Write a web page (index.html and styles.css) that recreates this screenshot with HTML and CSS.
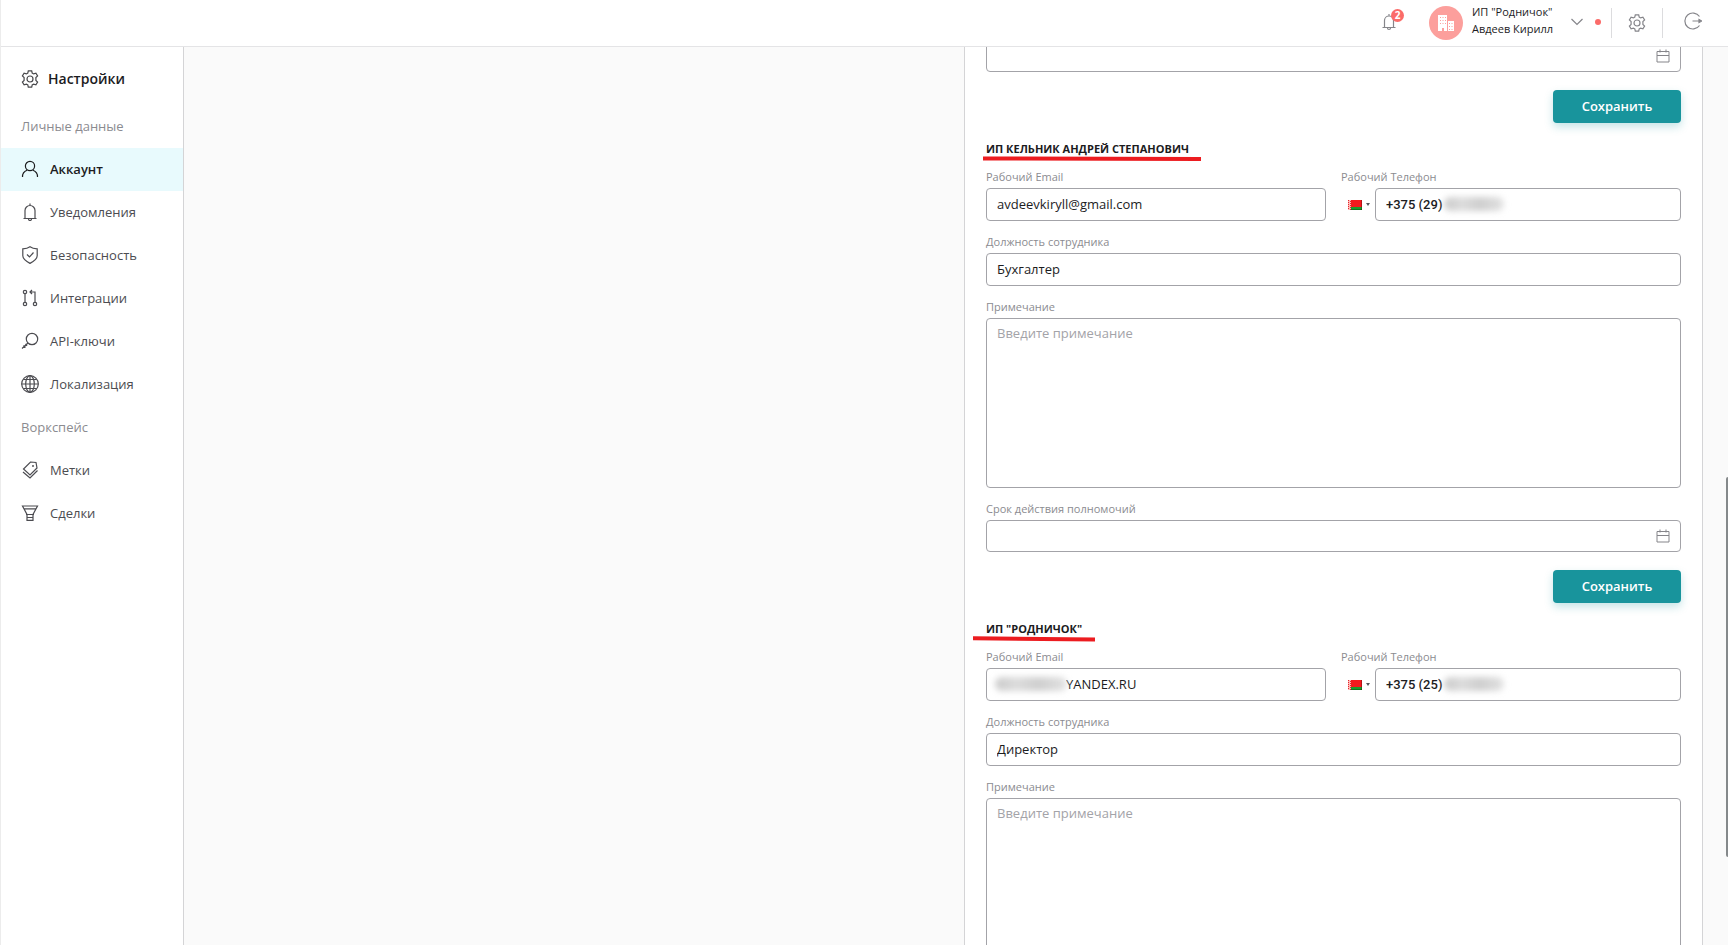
FILE: index.html
```html
<!DOCTYPE html>
<html lang="ru">
<head>
<meta charset="utf-8">
<title>Настройки</title>
<link rel="stylesheet" href="styles.css">
</head>
<body>
<svg class="defs" aria-hidden="true">
  <symbol id="gear" viewBox="0 0 18 18"><path d="M7.300 .8h3.400l.5 2.300 1.400.8 2.300-.7 1.700 2.800-1.700 1.600v2.800l1.700 1.600-1.700 2.800-2.300-.7-1.400.8-.5 2.300H7.300l-.5-2.300-1.400-.8-2.300.7L1.400 12l1.700-1.600V7.600L1.400 6l1.700-2.800 2.300.7 1.400-.8z"/><circle cx="9" cy="9" r="3"/></symbol>
  <symbol id="calendar" viewBox="0 0 14 14"><path d="M1 2.500h12v10.500H1zM1 6.500h12M4 .5v3M10 .5v3"/></symbol>
  <symbol id="flag" viewBox="0 0 14 10"><path fill="#f5191d" d="M0 0h14v7H0z"/><path fill="#1f9a2b" d="M0 7h14v3H0z"/><path fill="#ffb7b4" d="M0 0h3v10H0z"/><path stroke="#e3272c" stroke-dasharray="1 1" d="M.5 0v10M2.500 1v9"/><path stroke="#000" stroke-opacity=".25" d="M3 9.500h11M13.500 0v10"/></symbol>
</svg>

<header class="topbar">
  <button class="icon-btn bell" type="button" aria-label="Уведомления">
    <svg class="icon" width="14" height="18" viewBox="0 0 14 18"><path d="M2.500 14V7.500a4.500 4.500 0 0 1 9 0V14M.5 14.500h13M5.500 15a1.500 1.500 0 0 0 3 0M7 3V1"/></svg>
    <span class="badge">2</span>
  </button>
  <button class="account" type="button">
    <span class="avatar"><svg width="18" height="18" viewBox="0 0 18 18"><path fill="#fff" fill-rule="evenodd" d="M2 1h8v16H7v-3H5v3H1V1zM3 3v1h1V3zm2.500 0v1h1V3zM8 3v1h1V3zM3 6v1h1V6zm2.500 0v1h1V6zM8 6v1h1V6zM3 9v1h1V9zm2.500 0v1h1V9zM8 9v1h1V9zM11 7h6v10h-6zm1 2v1h1V9zm2.500 0v1h1V9zM12 12v1h1v-1zm2.500 0v1h1v-1zM12 15v1h1v-1zm2.500 0v1h1v-1z"/></svg></span>
    <span class="names"><span>ИП "Родничок"</span><span>Авдеев Кирилл</span></span>
    <svg class="icon chevron" width="12" height="8" viewBox="0 0 12 8"><path d="M.5 1 6 6.500 11.500 1"/></svg>
    <span class="dot"></span>
  </button>
  <button class="icon-btn settings" type="button" aria-label="Настройки"><svg class="icon" width="18" height="18"><use href="#gear"/></svg></button>
  <button class="icon-btn logout" type="button" aria-label="Выйти"><svg class="icon" width="18" height="18" viewBox="0 0 18 18"><path d="M15.500 4.500A8 8 0 1 0 15.500 13.500M8.500 9H17"/><path fill="currentColor" d="M15 7.500 17.500 9 15 10.500z"/></svg></button>
</header>

<div class="layout">
  <nav class="sidebar">
    <h1 class="title"><svg class="icon" width="18" height="18"><use href="#gear"/></svg>Настройки</h1>
    <h2 class="group">Личные данные</h2>
    <a class="item active" href="#"><svg class="icon" width="18" height="18" viewBox="0 0 18 18"><circle cx="9" cy="6" r="4.600"/><path d="M1.500 17a7.500 7 0 0 1 4.500-6.700M16.500 17a7.500 7 0 0 0-4.500-6.700"/></svg>Аккаунт</a>
    <a class="item" href="#"><svg class="icon" width="18" height="18" viewBox="0 0 18 18"><path d="M4 15V7.500a5 5 0 0 1 10 0V15M2.500 15.500h13M7.500 16a1.500 1.500 0 0 0 3 0M9 2.500V.5"/></svg>Уведомления</a>
    <a class="item" href="#"><svg class="icon" width="18" height="18" viewBox="0 0 18 18"><path d="M9 .8c2 1.500 4.500 2 7.200 2v7c0 3.500-3.700 5.700-7.200 7.600-3.500-1.900-7.200-4.100-7.200-7.600v-7c2.700 0 5.200-.5 7.200-2zM6 8.500l2.500 2.500 4-4.500"/></svg>Безопасность</a>
    <a class="item" href="#"><svg class="icon" width="18" height="18" viewBox="0 0 18 18"><circle cx="4" cy="3" r="1.700"/><circle cx="4" cy="15" r="1.700"/><circle cx="14" cy="15" r="1.700"/><path d="M4 4.700v8.600M14 13.300V3H9M11 1 9 3l2 2"/></svg>Интеграции</a>
    <a class="item" href="#"><svg class="icon" width="18" height="18" viewBox="0 0 18 18"><circle cx="11" cy="7" r="5.700"/><path d="M7 11 1 16.500M2.500 13.500l2 2M4.500 12l1.500 1.800"/></svg>API-ключи</a>
    <a class="item" href="#"><svg class="icon" width="18" height="18" viewBox="0 0 18 18"><circle cx="9" cy="9" r="8.300"/><ellipse cx="9" cy="9" rx="4.300" ry="8.300"/><path d="M9 .5v17M.5 9h17M2.500 4.500h13M2.500 13.500h13"/></svg>Локализация</a>
    <h2 class="group">Воркспейс</h2>
    <a class="item" href="#"><svg class="icon" width="18" height="18" viewBox="0 0 18 18"><path d="M9.500 1 15 1.500l1 5.500-7 7-6.500-6zM2 11l7 6 7.500-7.500"/><circle cx="12" cy="5" r=".4"/></svg>Метки</a>
    <a class="item" href="#"><svg class="icon" width="18" height="18" viewBox="0 0 18 18"><path d="M1.500 2h15L12 10.500v5.800H6v-5.800zM3 4.800h12M5 10.500h8M6 13.500h6"/></svg>Сделки</a>
  </nav>

  <main class="content">
    <div class="panel">
      <form class="section first">
        <div class="date"><input class="input" id="term0" type="text" aria-label="Срок действия полномочий"><svg class="icon cal" width="14" height="14"><use href="#calendar"/></svg></div>
        <button class="save" type="button">Сохранить</button>
      </form>

      <form class="section">
        <h3 class="company">ИП КЕЛЬНИК АНДРЕЙ СТЕПАНОВИЧ
          <svg class="mark mark-a" width="218" height="6" viewBox="0 0 218 6"><path d="M0 2.500 218 3"/></svg></h3>
        <div class="row">
          <div class="field"><label for="mail1">Рабочий Email</label><input class="input" id="mail1" type="text" value="avdeevkiryll@gmail.com"></div>
          <div class="field"><label for="tel1">Рабочий Телефон</label>
            <div class="phone"><button class="country" type="button" aria-label="Беларусь"><svg width="14" height="10"><use href="#flag"/></svg><span class="caret"></span></button>
              <div class="masked"><input class="input tel" id="tel1" type="text" value="+375 (29)"><span class="smudge smudge-tel"></span></div></div></div>
        </div>
        <div class="field"><label for="job1">Должность сотрудника</label><input class="input" id="job1" type="text" value="Бухгалтер"></div>
        <div class="field"><label for="note1">Примечание</label><textarea class="input note" id="note1" placeholder="Введите примечание"></textarea></div>
        <div class="field"><label for="term1">Срок действия полномочий</label>
          <div class="date"><input class="input" id="term1" type="text"><svg class="icon cal" width="14" height="14"><use href="#calendar"/></svg></div></div>
        <button class="save" type="button">Сохранить</button>
      </form>

      <form class="section">
        <h3 class="company">ИП "РОДНИЧОК"
          <svg class="mark mark-b" width="122" height="6" viewBox="0 0 122 6"><path d="M0 2.300 122 3.500"/></svg></h3>
        <div class="row">
          <div class="field"><label for="mail2">Рабочий Email</label>
            <div class="masked"><input class="input hidden-start" id="mail2" type="text" value="YANDEX.RU"><span class="smudge smudge-mail"></span></div></div>
          <div class="field"><label for="tel2">Рабочий Телефон</label>
            <div class="phone"><button class="country" type="button" aria-label="Беларусь"><svg width="14" height="10"><use href="#flag"/></svg><span class="caret"></span></button>
              <div class="masked"><input class="input tel" id="tel2" type="text" value="+375 (25)"><span class="smudge smudge-tel"></span></div></div></div>
        </div>
        <div class="field"><label for="job2">Должность сотрудника</label><input class="input" id="job2" type="text" value="Директор"></div>
        <div class="field"><label for="note2">Примечание</label><textarea class="input note" id="note2" placeholder="Введите примечание"></textarea></div>
      </form>
    </div>
    <span class="scroll-thumb"></span>
  </main>
</div>
</body>
</html>
```

FILE: styles.css
```css
* { box-sizing: border-box; }
body {
  margin: 0;
  height: 100vh;
  display: flex;
  flex-direction: column;
  overflow: hidden;
  border-left: 1px solid #ececec;
  background: #fff;
  color: #1c1c1e;
  font-family: "Open Sans", "Noto Sans", sans-serif;
  font-size: 13px;
}
button { border: 0; padding: 0; background: none; font: inherit; color: inherit; }
.defs { position: absolute; width: 0; height: 0; }
.icon { fill: none; stroke: currentColor; stroke-width: 1.2; flex: none; }

.topbar {
  flex: none;
  display: flex;
  justify-content: flex-end;
  align-items: flex-start;
  height: 47px;
  padding: 4px 26px 0 0;
  border-bottom: 1px solid #e4e4e6;
  background: #fff;
  color: #85858a;
  z-index: 1;
}
.icon-btn { display: flex; align-items: center; justify-content: center; height: 38px; }
.bell { position: relative; width: 14px; height: 36px; margin-right: 33px; }
.badge {
  position: absolute;
  top: 5px;
  left: 9px;
  width: 13px;
  height: 13px;
  border-radius: 50%;
  background: #fb6b69;
  color: #fff;
  font-size: 10px;
  font-weight: 700;
  line-height: 13px;
  text-align: center;
}
.account { display: flex; align-items: center; height: 36px; margin-right: 10px; }
.avatar {
  display: flex;
  align-items: center;
  justify-content: center;
  width: 34px;
  height: 34px;
  margin: 2px 9px 0 0;
  border-radius: 50%;
  background: #fc9f9c;
}
.names {
  display: flex;
  flex-direction: column;
  width: 99px;
  padding-bottom: 5px;
  color: #1c1c1e;
  font-size: 11px;
  line-height: 17px;
  text-align: left;
}
.dot { width: 6px; height: 6px; margin-left: 12px; border-radius: 50%; background: #fb6b69; }
.settings { width: 52px; height: 30px; margin-top: 4px; border: solid #dcdcde; border-width: 0 1px; }
.logout { margin-left: 21px; height: 34px; }

.layout { flex: 1; display: flex; min-height: 0; }
.sidebar {
  flex: none;
  width: 183px;
  padding-top: 11px;
  border-right: 1px solid #d4d4d6;
}
.title, .group, .item { display: flex; align-items: center; height: 43px; margin: 0; padding: 0 0 2px 20px; }
.title { gap: 9px; margin-bottom: 4px; font-size: 14px; font-weight: 600; }
.title .icon { color: #48484b; }
.group { color: #8b8b90; font-size: 13px; font-weight: 400; }
.item { gap: 11px; color: #4c4c51; font-weight: 500; text-decoration: none; }
.active { background: #e8fafd; color: #1c1c1e; font-weight: 600; }

.content {
  position: relative;
  flex: 1;
  display: flex;
  justify-content: flex-end;
  padding-right: 25px;
  background: #fafafa;
}
.panel {
  flex: 0 1 739px;
  padding: 0 21px;
  overflow: hidden;
  border: solid #d4d4d6;
  border-width: 0 1px;
  background: #fff;
}
.scroll-thumb {
  position: absolute;
  top: 430px;
  right: 0;
  width: 2px;
  height: 380px;
  border-radius: 2px 0 0 2px;
  background: #85898b;
}

.section { display: flex; flex-direction: column; gap: 13px; padding-top: 16px; }
.first { margin-top: -7px; padding-top: 0; }
.company {
  position: relative;
  margin: 0 0 -3px;
  font-size: 11px;
  font-weight: 700;
  line-height: 20px;
}
.mark { position: absolute; fill: none; stroke: #ec1c20; stroke-width: 4; }
.mark-a { top: 17px; left: -3px; }
.mark-b { top: 17px; left: -13px; }

.row { display: grid; grid-template-columns: 1fr 1fr; gap: 15px; }
.field { display: flex; flex-direction: column; gap: 3px; }
label { color: #8b8b90; font-size: 11px; line-height: 16px; }
.input {
  display: block;
  width: 100%;
  height: 33px;
  padding: 0 10px 2px;
  border: 1px solid #a3a3a8;
  border-radius: 4px;
  background: #fff;
  color: #1c1c1e;
  font: 13px "Open Sans", "Noto Sans", sans-serif;
  outline: 0;
}
.note { height: 170px; padding-top: 5px; resize: none; }
.note::placeholder { color: #a3a3a8; }
.phone { display: flex; }
.country { display: flex; align-items: center; gap: 4px; flex: none; width: 34px; padding-left: 7px; }
.caret { border: 2px solid transparent; border-top: 3px solid #55555a; border-bottom: 0; }
.masked { position: relative; flex: 1; }
.tel { padding-bottom: 0; font-family: Roboto, sans-serif; font-weight: 500; }
.hidden-start { padding-left: 79px; }
.smudge {
  position: absolute;
  top: 9px;
  height: 14px;
  border-radius: 7px;
  background: linear-gradient(90deg, #cacaca, #dcdcdc 30%, #cecece 60%, #e2e2e2);
  filter: blur(3px);
}
.smudge-tel { left: 69px; width: 60px; }
.smudge-mail { left: 9px; width: 72px; }

.date { position: relative; }
.date .input { height: 32px; padding-right: 36px; }
.cal { position: absolute; top: 9px; right: 11px; color: #85858a; stroke-width: 1; }
.save {
  align-self: flex-end;
  width: 128px;
  height: 33px;
  margin-top: 5px;
  padding-bottom: 2px;
  border-radius: 4px;
  background: #18949c;
  box-shadow: 0 4px 8px rgba(24, 148, 156, .25);
  color: #fff;
  font-weight: 600;
}
```
